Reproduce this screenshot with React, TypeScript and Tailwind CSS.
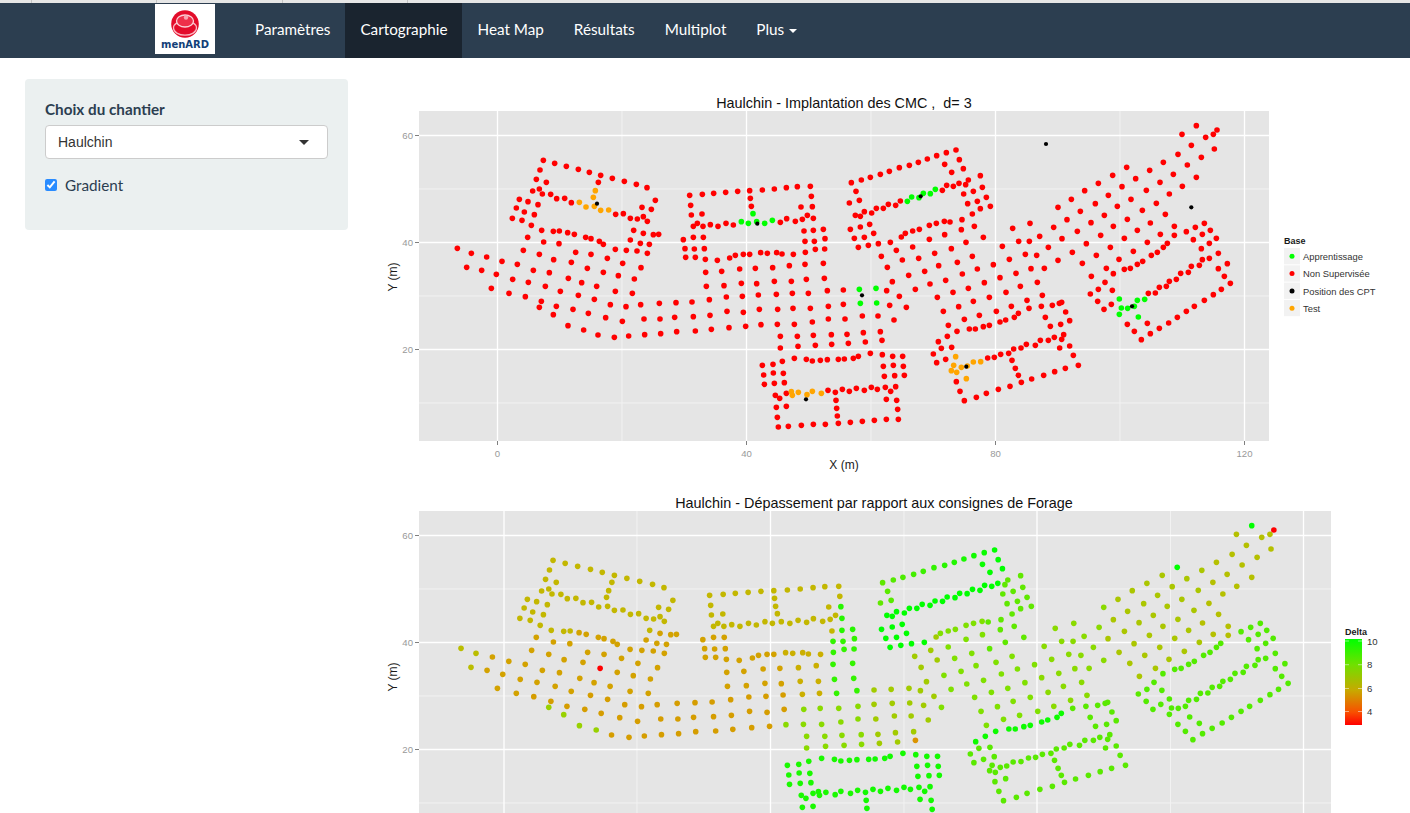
import type { ReactNode } from 'react';

type Pt = [number, number];

// pile positions read off the plot, grouped by the crop they were measured in
const pairs = (ox: number, oy: number, flat: number[]): Pt[] => {
	const out: Pt[] = [];
	for (let i = 0; i < flat.length; i += 2) {
		out.push([ox + flat[i] / 3, oy + flat[i + 1] / 3]);
	}
	return out;
};

const redPiles: Pt[] = [
	...pairs(380, 90, [
		490, 211, 524, 220, 559, 229, 595, 238, 628, 247, 662, 256, 697, 265, 733, 274, 769, 283, 801, 293, 480, 240, 469, 268, 499, 277, 655, 277, 458, 303, 478, 297, 487, 312, 512, 313, 530, 326, 554, 325, 574, 338, 418, 328, 444, 335, 474, 344, 409, 354, 433, 366, 463, 374, 397, 385, 426, 391, 454, 406, 826, 331, 786, 352, 814, 358, 707, 373, 730, 371, 751, 385, 772, 387, 790, 380, 802, 394,
		485, 421, 520, 424, 538, 423, 563, 428, 583, 433, 617, 442, 633, 446, 658, 454, 670, 463, 761, 421, 790, 430, 820, 434, 836, 433, 443, 442, 491, 456, 537, 461, 751, 450, 781, 460, 808, 463,
		232, 475, 274, 490, 320, 501, 366, 514, 430, 481, 478, 493, 521, 509, 587, 487, 633, 493, 682, 505, 706, 478, 739, 481, 771, 483, 802, 490, 412, 523, 574, 517, 728, 520,
		260, 532, 305, 541, 349, 553, 460, 541, 508, 548, 622, 535, 670, 547, 715, 557, 783, 533, 763, 567, 398, 568, 445, 577, 565, 565, 605, 578, 650, 589, 334, 595, 387, 610, 436, 620, 496, 589, 541, 604, 595, 616, 643, 628, 706, 604, 757, 610,
		484, 634, 478, 652, 529, 649, 579, 658, 625, 670, 691, 644, 738, 650, 782, 644, 838, 640, 888, 638, 936, 636, 988, 629, 520, 674, 677, 683, 727, 694, 792, 687, 840, 687, 884, 682, 940, 680, 990, 676, 564, 707, 611, 720, 654, 735, 703, 742, 746, 738, 794, 734, 842, 731, 890, 725, 946, 723, 994, 718,
		929, 316, 967, 313, 1001, 310, 932, 346, 934, 375, 966, 372, 940, 409, 952, 400, 969, 409, 991, 404, 1014, 409, 910, 449, 940, 442, 970, 442, 915, 476, 943, 477, 973, 476, 917, 502, 946, 502, 976, 508, 1012, 511, 977, 547, 979, 589,
	]),
	...pairs(720, 90, [
		17, 307, 53, 304, 89, 302, 127, 300, 163, 297, 199, 293, 232, 290, 271, 289, 91, 325, 94, 349, 274, 319, 243, 351, 277, 350, 18, 400, 40, 405, 181, 397, 200, 386, 226, 394, 247, 388, 262, 376, 280, 385, 252, 423, 280, 421, 310, 418, 255, 454, 283, 454, 315, 446,
		29, 504, 46, 496, 70, 493, 89, 493, 122, 488, 142, 490, 170, 488, 186, 492, 220, 493, 256, 487, 286, 478, 314, 477, 5, 544, 59, 537, 106, 535, 158, 533, 208, 527, 255, 523, 310, 520, 12, 587, 64, 580, 110, 581, 163, 574, 214, 574, 259, 568, 313, 565, 19, 621, 67, 619, 115, 615, 169, 613, 217, 610, 265, 610, 322, 602, 370, 600, 21, 664, 70, 667, 118, 658, 173, 658, 219, 655, 271, 655, 325, 649, 370, 643, 27, 713, 77, 709, 123, 704, 172, 703, 223, 703, 277, 696, 325, 687, 375, 687, 427, 678, 474, 678, 522, 690, 181, 739, 232, 739, 280, 736, 334, 734, 381, 733, 430, 728, 481, 725, 181, 774, 234, 769, 286, 766, 335, 763, 385, 760, 436, 756, 486, 751, 500, 602, 538, 619, 509, 646, 559, 652,
		394, 278, 424, 270, 451, 262, 481, 253, 508, 244, 538, 233, 568, 226, 595, 217, 622, 207, 650, 197, 679, 188, 708, 180, 674, 223, 718, 209, 730, 236, 695, 247, 781, 257, 745, 270, 717, 280, 737, 284, 700, 289, 680, 286, 787, 292, 667, 301, 408, 304, 418, 331, 388, 339, 731, 312, 760, 304, 799, 322, 772, 334, 743, 341, 811, 349, 781, 356, 757, 372, 726, 389, 763, 409, 790, 442, 541, 333, 527, 346, 505, 343, 490, 355, 469, 355, 455, 369, 433, 365, 421, 379, 406, 376,
		449, 403, 421, 411, 391, 418, 461, 430, 433, 442, 403, 445, 445, 466, 415, 472, 475, 461, 511, 457, 544, 441, 556, 430, 578, 423, 598, 418, 628, 406, 649, 400, 673, 394, 690, 396, 724, 419, 674, 434, 628, 448, 738, 457, 694, 476, 644, 490, 529, 481, 578, 471, 484, 499, 547, 510, 596, 505, 656, 527, 712, 517, 757, 499, 502, 532, 566, 556, 614, 544, 677, 571, 727, 552, 772, 537, 820, 524, 517, 575, 630, 582, 586, 598, 745, 595, 793, 578, 699, 607, 652, 622, 808, 622, 760, 634, 716, 650, 670, 664, 778, 676, 733, 688, 829, 664, 685, 706, 711, 724, 748, 717, 766, 717, 790, 710, 808, 706, 840, 696, 857, 690, 883, 682, 895, 670, 921, 631, 927, 655, 964, 649, 997, 646, 976, 682, 1018, 640, 991, 709, 682, 739, 655, 755, 664, 775, 695, 772,
		878, 415, 930, 400, 1001, 412, 959, 439, 1014, 352, 847, 469, 896, 454, 928, 454, 985, 472, 868, 508, 916, 493, 950, 496, 1014, 511, 888, 550, 933, 536, 973, 535, 840, 563, 901, 589, 952, 577, 858, 607, 967, 616, 874, 649, 881, 777, 903, 774, 919, 763, 946, 766, 961, 751, 985, 751, 1003, 742, 1019, 774,
	]),
	...pairs(1060, 110, [
		409, 47, 366, 73, 437, 82, 460, 73, 471, 60, 394, 106, 463, 117, 354, 133, 424, 142, 310, 157, 382, 165, 200, 172, 269, 181, 340, 193, 409, 202, 158, 196, 227, 206, 300, 217, 367, 229, 115, 220, 186, 230, 259, 241, 328, 252, 74, 242, 145, 256, 213, 268, 34, 268, 106, 281, 172, 289, 289, 280, 61, 304, 133, 316, 247, 301, 316, 313, 21, 329, 93, 338, 160, 349, 202, 328, 271, 339, 52, 364, 122, 376, 232, 361, 343, 349, 6, 386, 193, 385, 301, 373, 343, 376, 79, 401, 151, 412, 262, 397, 322, 400, 37, 427, 109, 436, 220, 424, 310, 412, 292, 427, 274, 436, 177, 448, 248, 454, 232, 463, 211, 475, 193, 478, 67, 460, 139, 475, 160, 491, 94, 499, 135, 517, 115, 538, 157, 541, 91, 552, 113, 574, 154, 583, 132, 598,
		379, 365, 406, 352, 433, 340, 451, 361, 427, 373, 400, 389, 469, 385, 448, 400, 424, 416, 475, 430, 448, 445, 427, 449, 418, 466, 394, 469, 385, 487, 362, 490, 349, 508, 328, 514, 319, 529, 298, 532, 286, 549, 265, 550, 502, 461, 475, 476, 493, 499, 511, 520, 484, 538, 460, 554, 433, 571, 403, 589, 379, 604, 352, 622, 326, 639, 298, 655, 271, 671, 244, 689, 223, 664, 202, 643, 262, 640, 5, 577, 17, 606, 29, 632, 2, 643, 11, 674, 5, 688, 29, 708,
	]),
	...pairs(480, 280, [
		907, 244, 943, 235, 979, 238, 997, 243, 1021, 241, 1042, 239, 1075, 238, 1093, 237, 1120, 235, 1135, 229, 1171, 220, 1207, 224, 1238, 229, 847, 256, 879, 253, 1210, 259, 1240, 256, 851, 285, 880, 279, 910, 280, 1213, 289, 1244, 287, 853, 313, 883, 310, 913, 308, 919, 340, 886, 346, 899, 355, 1044, 331, 1066, 337, 1087, 328, 1108, 334, 1129, 325, 1153, 331, 1174, 322, 1192, 328, 1216, 322, 1232, 334, 1247, 320, 1068, 361, 1219, 358, 1250, 361, 889, 382, 919, 379, 1070, 385, 1253, 388, 892, 412, 1072, 408, 895, 441, 925, 439, 964, 436, 1000, 433, 1036, 433, 1075, 430, 1111, 427, 1147, 424, 1183, 421, 1219, 418, 1255, 418,
	]),
	...pairs(880, 280, [
		68, 229, 70, 259, 73, 286, 160, 222, 170, 248, 197, 238, 229, 305, 240, 334, 253, 362, 289, 352, 319, 340, 355, 328, 390, 319, 424, 307, 455, 297, 491, 286, 524, 275, 556, 265, 595, 256, 580, 226, 362, 223, 386, 220, 343, 232, 323, 234, 396, 241, 406, 265, 415, 286,
	]),
];

const greenPiles: Pt[] = [
	...pairs(720, 90, [64, 395, 85, 400, 110, 395, 134, 400, 157, 391, 99, 371, 418, 598, 468, 595, 421, 640, 470, 639, 562, 334, 575, 321, 597, 323, 610, 310, 631, 311, 646, 298]),
	...pairs(1060, 110, [178, 567, 232, 571, 254, 568, 184, 594, 203, 595, 223, 589, 178, 613, 235, 621]),
];

const orangePiles: Pt[] = [
	...pairs(380, 90, [646, 302, 640, 322, 598, 337, 618, 351, 643, 349, 662, 361, 686, 360]),
	...pairs(480, 280, [934, 335, 937, 346, 955, 337, 981, 344, 997, 334, 1024, 340]),
	...pairs(880, 280, [227, 230, 221, 256, 244, 262, 262, 258, 280, 246, 302, 245, 214, 272, 230, 277, 259, 296]),
];

const cptPoints: Pt[] = [
	[597, 203.7],
	[757.3, 223.7],
	[862, 295.3],
	[920.7, 196.3],
	[1046, 144],
	[1191.3, 207.3],
	[1132, 306.3],
	[806, 399.3],
	[966.3, 366.7],
];

const allPiles = [...redPiles, ...greenPiles, ...orangePiles];

const near = (x: number, y: number, px: number, py: number) => Math.abs(x - px) < 3 && Math.abs(y - py) < 3;

// rough Delta value per zone of the site, in coordinates of the first plot
function deltaAt(x: number, y: number) {
	if (near(x, y, 587.3, 268.3) || near(x, y, 1217, 130)) return 3;
	if (near(x, y, 1196.3, 125.7) || near(x, y, 1126.7, 167.3)) return 10;
	if (near(x, y, 880.7, 340)) return 5.8;
	const v = y + 0.3 * (x - 850);
	const w = y + 0.35 * (x - 950);
	const s = y + 0.57 * (x - 1090);
	if (x > 530 && x < 600 && y >= 0.48 * x + 48) return 7.5;
	if (x < 480) return 6.8;
	if (x < 835) {
		if (y >= 352) return 9.6;
		if (y < 232) return x > 812 ? 9.4 : 6.6;
		if (y < 295) return x >= 795 ? 9.2 : x < 760 ? 6.1 : 6.4;
		return x >= 760 ? 7.8 : 6;
	}
	if (x < 905 && y >= 352) return 9.7;
	if (x <= 995 && v < 205) return Math.min(10, 8.5 + (x - 850) / 70);
	if (x < 960 && v < 232) return 10;
	if (x < 895 && y < 250) return 10;
	if (x >= 945 && x <= 995 && y < 250) return 8.5;
	if (x < 905) return 7.3;
	if (x >= 930 && x < 1095 && w >= 330) return w < 345 && x < 1025 ? 9.8 : 8.6;
	if (x < 1000) return 8;
	if (s >= 284) return 8.7;
	if (x > 1150) return 6.9;
	return x < 1060 ? 7.8 : 7.1;
}

const ramp: [number, number[]][] = [
	[3, [255, 0, 0]],
	[5, [240, 112, 0]],
	[6.5, [200, 180, 0]],
	[8, [128, 224, 0]],
	[10, [0, 255, 0]],
];

function deltaColor(d: number) {
	for (let i = 1; i < ramp.length; i++) {
		if (d <= ramp[i][0]) {
			const [d0, c0] = ramp[i - 1];
			const [d1, c1] = ramp[i];
			const t = (d - d0) / (d1 - d0);
			return `rgb(${c0.map((c, j) => Math.round(c + (c1[j] - c) * t)).join(',')})`;
		}
	}
	return 'rgb(0,255,0)';
}

interface PlotProps {
	x0: number;
	y0: number;
	width: number;
	height: number;
	panelX: number;
	panelW: number;
	panelY: number;
	panelH: number;
	majorX: number[];
	minorX: number[];
	majorY: number[];
	minorY: number[];
	children: ReactNode;
}

// ggplot style panel, viewBox is in page coordinates to keep the data simple
function Plot({ x0, y0, width, height, panelX, panelW, panelY, panelH, majorX, minorX, majorY, minorY, children }: PlotProps) {
	const bottom = panelY + panelH;
	return (
		<svg width={width} height={height} viewBox={`${x0} ${y0} ${width} ${height}`} className="block" fontFamily="'Liberation Sans', Arial, sans-serif">
			<rect x={panelX} y={panelY} width={panelW} height={panelH} fill="#e5e5e5" />
			{minorX.map((x) => <line key={x} x1={x} x2={x} y1={panelY} y2={bottom} stroke="#f2f2f2" strokeWidth={1} />)}
			{minorY.map((y) => <line key={y} x1={panelX} x2={panelX + panelW} y1={y} y2={y} stroke="#f2f2f2" strokeWidth={1} />)}
			{majorX.map((x) => <line key={x} x1={x} x2={x} y1={panelY} y2={bottom} stroke="#ffffff" strokeWidth={1.3} />)}
			{majorY.map((y) => <line key={y} x1={panelX} x2={panelX + panelW} y1={y} y2={y} stroke="#ffffff" strokeWidth={1.3} />)}
			{majorY.map((y, i) => (
				<g key={y}>
					<line x1={panelX - 4} x2={panelX} y1={y} y2={y} stroke="#7f7f7f" strokeWidth={1} />
					<text x={panelX - 6} y={y + 3.5} fontSize={9.6} fill="#999999" textAnchor="end">{['60', '40', '20'][i]}</text>
				</g>
			))}
			{children}
		</svg>
	);
}

function ImplantationPlot() {
	return (
		<Plot
			x0={360}
			y0={90}
			width={1050}
			height={400}
			panelX={419}
			panelW={850}
			panelY={111}
			panelH={330}
			majorX={[497.5, 746.5, 995.5, 1244.5]}
			minorX={[622, 871, 1120]}
			majorY={[135.5, 242.5, 349.5]}
			minorY={[189, 296, 403]}
		>
			<text x={844} y={108} fontSize={14.4} fill="#111111" textAnchor="middle" xmlSpace="preserve">Haulchin - Implantation des CMC ,  d= 3</text>
			{[['0', 497.5], ['40', 746.5], ['80', 995.5], ['120', 1244.5]].map(([label, x]) => (
				<g key={label}>
					<line x1={x} x2={x} y1={441} y2={445} stroke="#7f7f7f" strokeWidth={1} />
					<text x={x} y={457} fontSize={9.6} fill="#999999" textAnchor="middle">{label}</text>
				</g>
			))}
			<text x={844} y={469} fontSize={12} fill="#1a1a1a" textAnchor="middle">X (m)</text>
			<text transform="translate(397 277) rotate(-90)" fontSize={12} fill="#1a1a1a" textAnchor="middle">Y (m)</text>

			{redPiles.map(([x, y], i) => <circle key={i} cx={x} cy={y} r={2.8} fill="#ff0000" />)}
			{greenPiles.map(([x, y], i) => <circle key={i} cx={x} cy={y} r={2.8} fill="#00ff00" />)}
			{orangePiles.map(([x, y], i) => <circle key={i} cx={x} cy={y} r={2.8} fill="#ffa500" />)}
			{cptPoints.map(([x, y], i) => <circle key={i} cx={x} cy={y} r={2.1} fill="#000000" />)}

			<text x={1284} y={244} fontSize={9} fontWeight="bold" fill="#1a1a1a">Base</text>
			{[
				['Apprentissage', '#00ff00'],
				['Non Supervisée', '#ff0000'],
				['Position des CPT', '#000000'],
				['Test', '#ffa500'],
			].map(([label, color], i) => (
				<g key={label}>
					<rect x={1284} y={248 + i * 17.3} width={16} height={16.3} fill="#f2f2f2" />
					<circle cx={1292} cy={256.3 + i * 17.3} r={2.5} fill={color} />
					<text x={1303} y={260 + i * 17.3} fontSize={9.4} fill="#333333">{label}</text>
				</g>
			))}
		</Plot>
	);
}

function DeltaPlot() {
	return (
		<Plot
			x0={360}
			y0={490}
			width={1050}
			height={323}
			panelX={419}
			panelW={912}
			panelY={511}
			panelH={330}
			majorX={[504, 770.5, 1037, 1303.5]}
			minorX={[637, 904, 1170.5]}
			majorY={[535.5, 642.5, 749.5]}
			minorY={[589, 696, 803]}
		>
			<text x={874} y={508} fontSize={14.4} fill="#111111" textAnchor="middle">Haulchin - Dépassement par rapport aux consignes de Forage</text>
			<text transform="translate(397 677) rotate(-90)" fontSize={12} fill="#1a1a1a" textAnchor="middle">Y (m)</text>

			{allPiles.map(([x, y], i) => (
				<circle key={i} cx={504 + (x - 497.5) * 1.07} cy={y + 400} r={2.8} fill={deltaColor(deltaAt(x, y))} />
			))}

			<defs>
				<linearGradient id="deltaBar" x1="0" y1="0" x2="0" y2="1">
					<stop offset="0" stopColor="#00ff00" />
					<stop offset="0.3" stopColor="#70e000" />
					<stop offset="0.6" stopColor="#c8a800" />
					<stop offset="0.85" stopColor="#f85000" />
					<stop offset="1" stopColor="#ff0000" />
				</linearGradient>
			</defs>
			<text x={1345} y={635} fontSize={9} fontWeight="bold" fill="#1a1a1a">Delta</text>
			<rect x={1345} y={639} width={17} height={86} fill="url(#deltaBar)" />
			{[['10', 641], ['8', 664.7], ['6', 688.5], ['4', 711.5]].map(([label, y]) => (
				<g key={label}>
					<line x1={1345} x2={1349} y1={y} y2={y} stroke="#ffffff" strokeOpacity={0.5} />
					<line x1={1358} x2={1362} y1={y} y2={y} stroke="#ffffff" strokeOpacity={0.5} />
					<text x={1367} y={(y as number) + 3.5} fontSize={9.6} fill="#333333">{label}</text>
				</g>
			))}
		</Plot>
	);
}

const navItems = ['Paramètres', 'Cartographie', 'Heat Map', 'Résultats', 'Multiplot'];

function MenardLogo() {
	return (
		<div className="flex h-[50px] w-[60px] flex-col items-center bg-white pt-[5px]">
			<svg width="30" height="30" viewBox="0 0 30 30" className="block">
				<circle cx="15" cy="15" r="13.8" fill="#e30c2a" />
				<ellipse cx="15" cy="19" rx="11.5" ry="7.2" fill="none" stroke="#f9b7c0" strokeWidth="1.3" />
				<ellipse cx="15" cy="12" rx="8.5" ry="6" fill="#ee2f49" stroke="#fbd2d8" strokeWidth="1.3" />
				<circle cx="16" cy="8.5" r="2.2" fill="#f9a5b1" />
			</svg>
			<span className="mt-[1px] font-['DejaVu_Sans',sans-serif] text-[10px] leading-[10px] font-bold text-[#123f78]">menARD</span>
		</div>
	);
}

export default function App() {
	return (
		<div className="h-[813px] overflow-hidden bg-white font-['Lato',sans-serif]">
			<div className="flex h-[3px] bg-[#e6e6e6]">
				{[32, 125, 126, 125].map((w, i) => (
					<div key={i} className="border-r border-[#c4c4c4]" style={{ width: w }} />
				))}
			</div>
			<nav className="flex h-[55px] bg-[#2c3e50] pl-[155px]">
				<div className="pt-px">
					<MenardLogo />
				</div>
				<ul className="ml-[25px] flex text-[15.25px] text-white">
					{navItems.map((item) => (
						<li key={item} className={`flex items-center px-[15px] pb-[2px] ${item === 'Cartographie' ? 'bg-[#1a242f]' : ''}`}>
							{item}
						</li>
					))}
					<li className="flex items-center gap-[5px] px-[15px] pb-[2px]">
						Plus
						<span className="mt-[2px] h-0 w-0 border-x-4 border-t-4 border-x-transparent border-t-white" />
					</li>
				</ul>
			</nav>

			<div className="flex">
				<aside className="w-[360px] shrink-0 pt-[21px] pl-[25px]">
					<div className="h-[151px] w-[323px] rounded bg-[#ebf0f0] px-5 pt-5">
						<label className="block text-[15.25px] leading-[21px] font-bold text-[#2c3e50]">Choix du chantier</label>
						<div className="mt-[5px] flex h-[34px] w-[283px] items-center justify-between rounded border border-[#cccccc] bg-white pr-[18px] pl-3 font-['Liberation_Sans',sans-serif] text-sm text-[#333333]">
							Haulchin
							<span className="h-0 w-0 border-x-[5px] border-t-[5px] border-x-transparent border-t-[#333333]" />
						</div>
						<label className="mt-[18px] flex items-center gap-2 text-[15.25px] leading-[16px] text-[#2c3e50]">
							<input type="checkbox" defaultChecked className="m-0 h-3 w-3 accent-[#2a8cff]" />
							Gradient
						</label>
					</div>
				</aside>
				<main className="flex-1 pt-8">
					<ImplantationPlot />
					<DeltaPlot />
				</main>
			</div>
		</div>
	);
}
